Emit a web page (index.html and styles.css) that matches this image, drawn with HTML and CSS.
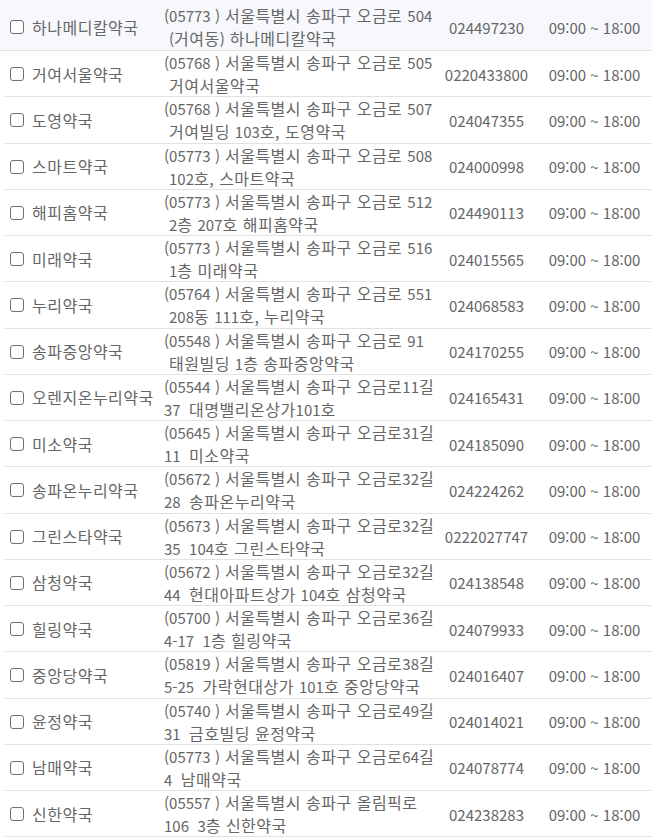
FILE: index.html
```html
<!DOCTYPE html>
<html lang="ko">
<head>
    <meta charset="UTF-8">
    <meta name="viewport" content="width=device-width, initial-scale=1.0">
    <title>약국 목록</title>
    <link rel="stylesheet" href="styles.css">
</head>
<body>

<div class="list">
    <div class="row active">
        <div class="name"><input type="checkbox">하나메디칼약국</div>
        <div class="addr"><span class="n">(05773 )</span> 서울특별시 송파구 오금로 <span class="n">504</span><br> <span class="n">(</span>거여동<span class="n">)</span> 하나메디칼약국</div>
        <div class="phone">024497230</div>
        <div class="hours">09:00 ~ 18:00</div>
    </div>
    <div class="row">
        <div class="name"><input type="checkbox">거여서울약국</div>
        <div class="addr"><span class="n">(05768 )</span> 서울특별시 송파구 오금로 <span class="n">505</span><br> 거여서울약국</div>
        <div class="phone">0220433800</div>
        <div class="hours">09:00 ~ 18:00</div>
    </div>
    <div class="row">
        <div class="name"><input type="checkbox">도영약국</div>
        <div class="addr"><span class="n">(05768 )</span> 서울특별시 송파구 오금로 <span class="n">507</span><br> 거여빌딩 <span class="n">103</span>호, 도영약국</div>
        <div class="phone">024047355</div>
        <div class="hours">09:00 ~ 18:00</div>
    </div>
    <div class="row">
        <div class="name"><input type="checkbox">스마트약국</div>
        <div class="addr"><span class="n">(05773 )</span> 서울특별시 송파구 오금로 <span class="n">508</span><br> <span class="n">102</span>호, 스마트약국</div>
        <div class="phone">024000998</div>
        <div class="hours">09:00 ~ 18:00</div>
    </div>
    <div class="row">
        <div class="name"><input type="checkbox">해피홈약국</div>
        <div class="addr"><span class="n">(05773 )</span> 서울특별시 송파구 오금로 <span class="n">512</span><br> <span class="n">2</span>층 <span class="n">207</span>호 해피홈약국</div>
        <div class="phone">024490113</div>
        <div class="hours">09:00 ~ 18:00</div>
    </div>
    <div class="row">
        <div class="name"><input type="checkbox">미래약국</div>
        <div class="addr"><span class="n">(05773 )</span> 서울특별시 송파구 오금로 <span class="n">516</span><br> <span class="n">1</span>층 미래약국</div>
        <div class="phone">024015565</div>
        <div class="hours">09:00 ~ 18:00</div>
    </div>
    <div class="row">
        <div class="name"><input type="checkbox">누리약국</div>
        <div class="addr"><span class="n">(05764 )</span> 서울특별시 송파구 오금로 <span class="n">551</span><br> <span class="n">208</span>동 <span class="n">111</span>호, 누리약국</div>
        <div class="phone">024068583</div>
        <div class="hours">09:00 ~ 18:00</div>
    </div>
    <div class="row">
        <div class="name"><input type="checkbox">송파중앙약국</div>
        <div class="addr"><span class="n">(05548 )</span> 서울특별시 송파구 오금로 <span class="n">91</span><br> 태원빌딩 <span class="n">1</span>층 송파중앙약국</div>
        <div class="phone">024170255</div>
        <div class="hours">09:00 ~ 18:00</div>
    </div>
    <div class="row">
        <div class="name"><input type="checkbox">오렌지온누리약국</div>
        <div class="addr"><span class="n">(05544 )</span> 서울특별시 송파구 오금로<span class="n">11</span>길<br><span class="n">37  </span>대명밸리온상가<span class="n">101</span>호</div>
        <div class="phone">024165431</div>
        <div class="hours">09:00 ~ 18:00</div>
    </div>
    <div class="row">
        <div class="name"><input type="checkbox">미소약국</div>
        <div class="addr"><span class="n">(05645 )</span> 서울특별시 송파구 오금로<span class="n">31</span>길<br><span class="n">11  </span>미소약국</div>
        <div class="phone">024185090</div>
        <div class="hours">09:00 ~ 18:00</div>
    </div>
    <div class="row">
        <div class="name"><input type="checkbox">송파온누리약국</div>
        <div class="addr"><span class="n">(05672 )</span> 서울특별시 송파구 오금로<span class="n">32</span>길<br><span class="n">28  </span>송파온누리약국</div>
        <div class="phone">024224262</div>
        <div class="hours">09:00 ~ 18:00</div>
    </div>
    <div class="row">
        <div class="name"><input type="checkbox">그린스타약국</div>
        <div class="addr"><span class="n">(05673 )</span> 서울특별시 송파구 오금로<span class="n">32</span>길<br><span class="n">35  104</span>호 그린스타약국</div>
        <div class="phone">0222027747</div>
        <div class="hours">09:00 ~ 18:00</div>
    </div>
    <div class="row">
        <div class="name"><input type="checkbox">삼청약국</div>
        <div class="addr"><span class="n">(05672 )</span> 서울특별시 송파구 오금로<span class="n">32</span>길<br><span class="n">44  </span>현대아파트상가 <span class="n">104</span>호 삼청약국</div>
        <div class="phone">024138548</div>
        <div class="hours">09:00 ~ 18:00</div>
    </div>
    <div class="row">
        <div class="name"><input type="checkbox">힐링약국</div>
        <div class="addr"><span class="n">(05700 )</span> 서울특별시 송파구 오금로<span class="n">36</span>길<br><span class="n">4-17  1</span>층 힐링약국</div>
        <div class="phone">024079933</div>
        <div class="hours">09:00 ~ 18:00</div>
    </div>
    <div class="row">
        <div class="name"><input type="checkbox">중앙당약국</div>
        <div class="addr"><span class="n">(05819 )</span> 서울특별시 송파구 오금로<span class="n">38</span>길<br><span class="n">5-25  </span>가락현대상가 <span class="n">101</span>호 중앙당약국</div>
        <div class="phone">024016407</div>
        <div class="hours">09:00 ~ 18:00</div>
    </div>
    <div class="row">
        <div class="name"><input type="checkbox">윤정약국</div>
        <div class="addr"><span class="n">(05740 )</span> 서울특별시 송파구 오금로<span class="n">49</span>길<br><span class="n">31  </span>금호빌딩 윤정약국</div>
        <div class="phone">024014021</div>
        <div class="hours">09:00 ~ 18:00</div>
    </div>
    <div class="row">
        <div class="name"><input type="checkbox">남매약국</div>
        <div class="addr"><span class="n">(05773 )</span> 서울특별시 송파구 오금로<span class="n">64</span>길<br><span class="n">4  </span>남매약국</div>
        <div class="phone">024078774</div>
        <div class="hours">09:00 ~ 18:00</div>
    </div>
    <div class="row">
        <div class="name"><input type="checkbox">신한약국</div>
        <div class="addr"><span class="n">(05557 )</span> 서울특별시 송파구 올림픽로<br><span class="n">106  3</span>층 신한약국</div>
        <div class="phone">024238283</div>
        <div class="hours">09:00 ~ 18:00</div>
    </div>
</div>

</body>
</html>
```

FILE: styles.css
```css
* {
    margin: 0;
    padding: 0;
    box-sizing: border-box;
}

body {
    font-family: 'Noto Sans CJK KR', 'Noto Sans', sans-serif;
    font-size: 15px;
    line-height: 23px;
    color: #666;
    background: #fff;
}

.list {
    padding-left: 5px;
}

.row {
    display: grid;
    grid-template-columns: 153px 278px 101px 1fr;
    align-items: center;
    height: 46.25px;
    border-bottom: 1px solid #e2e2e2;
}

.row.active {
    height: 51px;
    padding-top: 4px;
    margin-left: -5px;
    padding-left: 5px;
    background-color: #f6f8fc;
}

/* hangul runs are set a bit larger than the digits */
.name, .addr {
    font-size: 16px;
    letter-spacing: 0.5px;
}

.addr .n {
    font-size: 15px;
    letter-spacing: 0;
}

.name {
    display: flex;
    align-items: center;
    padding-left: 5px;
    white-space: nowrap;
}

.name input {
    appearance: none;
    flex: none;
    width: 14px;
    height: 14px;
    border: 1.5px solid #707070;
    border-radius: 3px;
    margin-right: 8px;
    background: #fff;
}

.addr {
    padding-left: 6px;
    white-space: pre;
}

.phone, .hours {
    text-align: center;
    white-space: nowrap;
}
```
